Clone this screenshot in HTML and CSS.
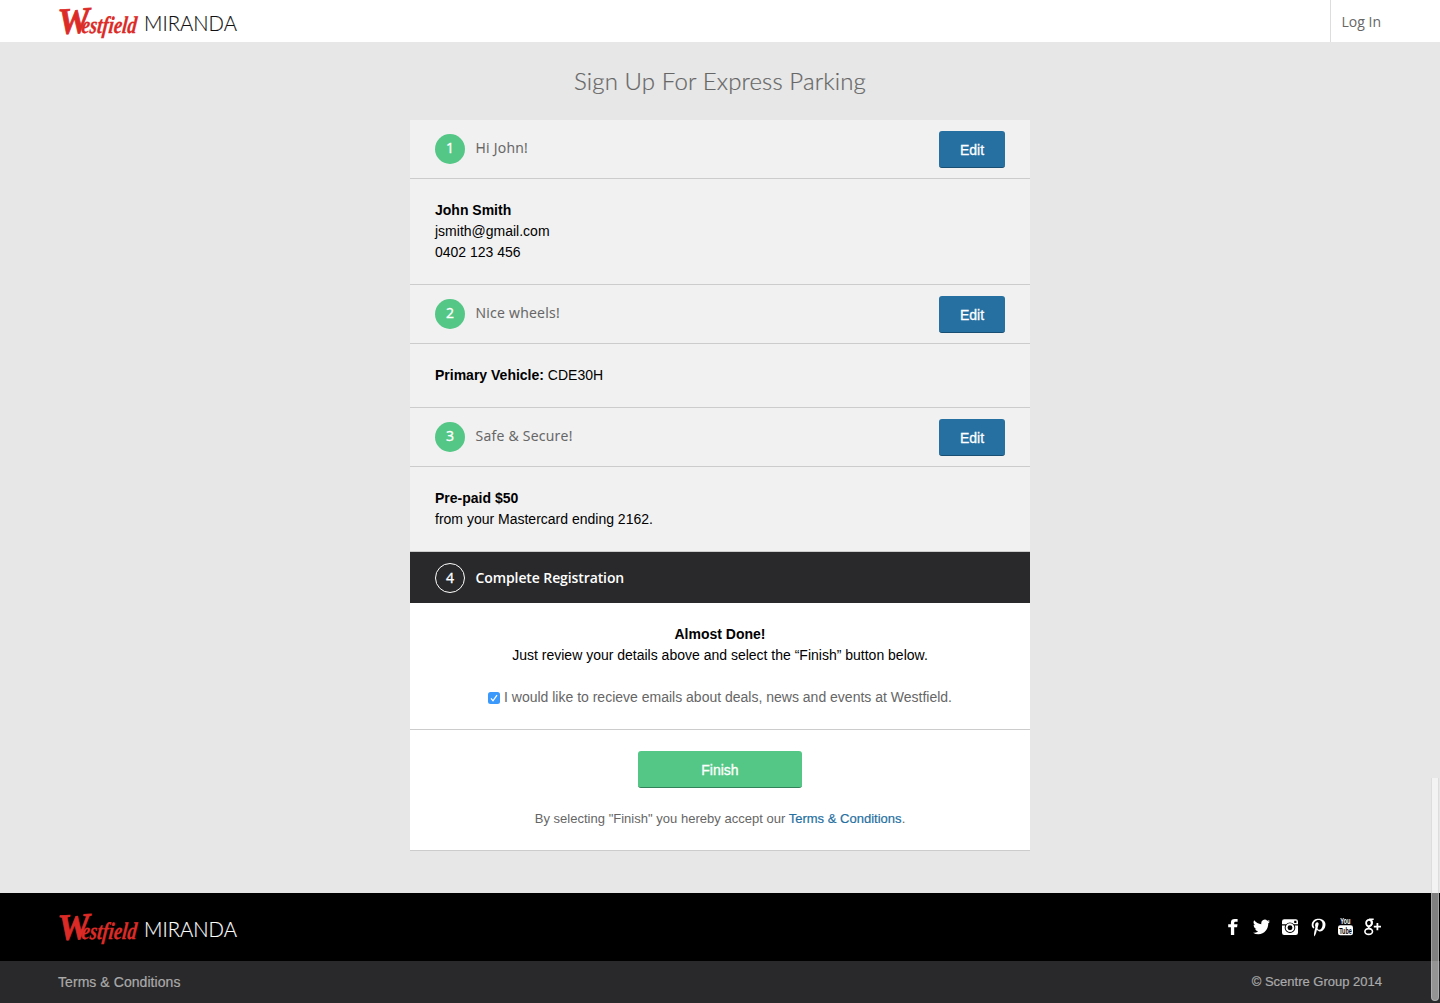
FILE: index.html
```html
<!DOCTYPE html>
<html lang="en">
<head>
<meta charset="utf-8">
<title>Sign Up For Express Parking</title>
<link rel="stylesheet" href="styles.css">
</head>
<body>
<header class="topbar">
  <svg class="logo" width="180" height="42" viewBox="0 0 180 42" role="img" aria-label="Westfield Miranda">
    <g class="logo-word">
      <text class="logo-cap" transform="translate(-.5 34) rotate(-3)" textLength="32" lengthAdjust="spacingAndGlyphs">W</text>
      <text class="logo-rest" transform="translate(22 32.500) skewX(-6)" textLength="55" lengthAdjust="spacingAndGlyphs">estfield</text>
    </g>
    <text class="logo-centre" x="85" y="31" textLength="93" lengthAdjust="spacingAndGlyphs">MIRANDA</text>
  </svg>
  <a class="login">Log In</a>
</header>
<main class="page">
  <h1 class="title">Sign Up For Express Parking</h1>
  <div class="steps">
    <section>
      <div class="step-head"><span class="num">1</span><h2 class="step-title">Hi John!</h2><button class="btn edit">Edit</button></div>
      <div class="step-body"><p><b>John Smith</b></p><p>jsmith@gmail.com</p><p>0402 123 456</p></div>
    </section>
    <section>
      <div class="step-head"><span class="num">2</span><h2 class="step-title">Nice wheels!</h2><button class="btn edit">Edit</button></div>
      <div class="step-body"><p><b>Primary Vehicle:</b> CDE30H</p></div>
    </section>
    <section>
      <div class="step-head"><span class="num">3</span><h2 class="step-title">Safe &amp; Secure!</h2><button class="btn edit">Edit</button></div>
      <div class="step-body"><p><b>Pre-paid $50</b></p><p>from your Mastercard ending 2162.</p></div>
    </section>
    <section class="current">
      <div class="step-head current-head"><span class="num outlined">4</span><h2 class="step-title">Complete Registration</h2></div>
      <div class="review">
        <p><b>Almost Done!</b></p>
        <p>Just review your details above and select the “Finish” button below.</p>
        <label class="optin">
          <svg class="check" width="12" height="12" viewBox="0 0 12 12"><rect width="12" height="12" rx="2.5" fill="#3b99fc"/><path d="M3 6.4 5 8.8 9 3.2" fill="none" stroke="#fff" stroke-width="1.3"/></svg>
          <span>I would like to recieve emails about deals, news and events at Westfield.</span>
        </label>
      </div>
      <div class="finish">
        <button class="btn go">Finish</button>
        <p class="terms">By selecting "Finish" you hereby accept our <a class="link">Terms &amp; Conditions</a>.</p>
      </div>
    </section>
  </div>
</main>
<footer>
  <div class="foot-top">
    <svg class="logo logo-inverse" width="180" height="42" viewBox="0 0 180 42" role="img" aria-label="Westfield Miranda">
      <g class="logo-word">
        <text class="logo-cap" transform="translate(-.5 34) rotate(-3)" textLength="32" lengthAdjust="spacingAndGlyphs">W</text>
        <text class="logo-rest" transform="translate(22 32.500) skewX(-6)" textLength="55" lengthAdjust="spacingAndGlyphs">estfield</text>
      </g>
      <text class="logo-centre" x="85" y="31" textLength="93" lengthAdjust="spacingAndGlyphs">MIRANDA</text>
    </svg>
    <div class="social">
      <svg width="10" height="18" viewBox="0 0 10 18"><path d="M2.900 17V9.300H.2V6.300h2.700V4.700C2.900 2 4.300 1 6.600 1h3v2.800H7.800C6.600 3.800 6.200 4.300 6.200 5.200v1.100h3.300l-.4 3H6.200V17z"/></svg>
      <svg width="17" height="18" viewBox="0 0 24 24" preserveAspectRatio="none"><path d="M23.950 4.570a10 10 0 0 1-2.820.77 4.960 4.960 0 0 0 2.160-2.720 9.900 9.900 0 0 1-3.120 1.190 4.920 4.920 0 0 0-8.390 4.480A13.940 13.940 0 0 1 1.640 3.160a4.920 4.920 0 0 0 1.520 6.570 4.900 4.900 0 0 1-2.230-.61v.06a4.920 4.920 0 0 0 3.950 4.830 5 5 0 0 1-2.210.08 4.940 4.940 0 0 0 4.600 3.420A9.870 9.870 0 0 1 0 19.540a14 14 0 0 0 7.550 2.210c9.050 0 14-7.500 14-13.990v-.64a9.940 9.940 0 0 0 2.400-2.550z"/></svg>
      <svg width="16" height="18" viewBox="0 0 16 18"><path fill-rule="evenodd" d="M2.200 1.200h11.600A2.200 2.200 0 0 1 16 3.400v11.400a2.200 2.200 0 0 1-2.200 2.200H2.200A2.200 2.200 0 0 1 0 14.800V3.400a2.200 2.200 0 0 1 2.200-2.200zM12.200 2.800v2.200h2.200V2.800zM0 6.300v1.100h3.200a5.300 5.300 0 1 0 9.600 0H16V6.300h-4.100a5.300 5.300 0 0 0-7.800 0z"/><circle cx="8" cy="9.700" r="3.400" fill="none" stroke="#fff" stroke-width="1.900"/></svg>
      <svg class="pin" width="15" height="19" viewBox="0 0 15 19"><path d="M5.800 12.100C5.300 14.700 4.800 17 3.100 18.500c-.5-3.700.8-6.500 1.400-9.600-1-1.800.1-5.400 2.300-4.500 2.700 1-2.300 6.600 1 7.300 3.500.7 4.900-6.200 2.700-8.400C7.500.2 1.900 3.400 2.600 7.700c.2 1 1.200 1.300.4 2.800C1.200 10.100.6 8.600.7 6.600.8 3.400 3.600 1.100 6.400.8c3.900-.4 7.500 1.400 8 4.800.5 4-1.800 8.100-5.900 7.800-1-.1-1.400-.6-2.700-1.300z"/></svg>
      <svg class="tube" width="15" height="20" viewBox="0 0 15 20"><text class="yt" x="2.200" y="8" textLength="10.300" lengthAdjust="spacingAndGlyphs">You</text><rect y="9.300" width="15" height="10" rx="2.200"/><text class="yt yt-dark" x="1.200" y="17.700" textLength="12.600" lengthAdjust="spacingAndGlyphs">Tube</text></svg>
      <svg width="17" height="18" viewBox="0 0 17 18" stroke="#fff"><g fill="none"><ellipse cx="4.900" cy="5.100" rx="2.800" ry="3.200" stroke-width="1.800"/><path d="M4.900 1.300H9.700M7.300 2c1.300 1.400 1.300 4-.3 5.100-1.900 1.200-3.400 1.700-2 2.700l2 1.300" stroke-width="1.500"/><ellipse cx="4.700" cy="13.500" rx="3.800" ry="2.900" stroke-width="1.600"/><path d="M9.800 8.700H17M13.400 5.100v7.200" stroke-width="1.800"/></g></svg>
    </div>
  </div>
  <div class="foot-bottom"><a class="foot-link">Terms &amp; Conditions</a><span class="copy">© Scentre Group 2014</span></div>
</footer>
<div class="scroll-thumb"></div>
</body>
</html>
```
FILE: styles.css
```css
* { box-sizing: border-box; }
body, p, h1, h2 { margin: 0; }
body {
  min-height: 1003px;
  display: flex;
  flex-direction: column;
  background: #e7e7e7;
  color: #000;
  font: 14px/21px "Liberation Sans", Arial, sans-serif;
}
.topbar {
  height: 42px;
  padding: 0 0 0 59px;
  display: flex;
  justify-content: space-between;
  align-items: center;
  background: #fff;
}
.logo { display: block; overflow: visible; }
.logo-word { fill: #dc2b27; stroke: #dc2b27; stroke-width: .3; font-family: "Liberation Serif", serif; font-style: italic; font-weight: 700; }
.logo-cap { font-size: 37px; stroke-width: .8; }
.logo-rest { font-size: 24px; }
.logo-centre { fill: #111; stroke: #111; stroke-width: .15; font: 300 21px Lato, sans-serif; }
.logo-inverse .logo-centre { fill: #fff; stroke: #fff; }
.login {
  width: 110px;
  height: 42px;
  padding-left: 10.5px;
  border-left: 1px solid #ddd;
  color: #666;
  font: 14px/43px "Open Sans", sans-serif;
}
.page { flex: 1; }
.title {
  padding-top: 21px;
  height: 78px;
  text-align: center;
  color: #666;
  font: 300 24px/36px Lato, sans-serif;
  letter-spacing: .12px;
  -webkit-text-stroke: .2px #666;
}
.steps { width: 620px; margin: 0 auto; background: #f1f1f1; }
.step-head {
  height: 59px;
  padding: 0 25px;
  display: flex;
  align-items: center;
  border-bottom: 1px solid #ccc;
  font-family: "Open Sans", sans-serif;
}
.num {
  width: 30px;
  height: 30px;
  margin-right: 10.5px;
  border-radius: 50%;
  background: #54c786;
  color: #fff;
  -webkit-text-stroke: .35px #fff;
  line-height: 28px;
  text-align: center;
}
.step-title { flex: 1; padding-bottom: 3px; color: #666; font-size: 14px; font-weight: 400; line-height: 21px; letter-spacing: .25px; -webkit-text-stroke: .1px #666; }
.btn {
  height: 37px;
  padding: 2px 0 0;
  border: 0;
  border-bottom: 1px solid #194f73;
  border-radius: 3px;
  background: #256fa1;
  color: #fff;
  font: 14px "Liberation Sans", Arial, sans-serif;
  -webkit-text-stroke: .3px #fff;
}
.edit { width: 66px; }
.step-body { padding: 21px 25px; border-bottom: 1px solid #ccc; }
.current { background: #fff; border-bottom: 1px solid #ccc; }
.current-head { height: 51px; border: 0; background: #29292b; }
.current-head .step-title { padding: 0; color: #fff; font-weight: 600; letter-spacing: -.1px; -webkit-text-stroke: 0; }
.outlined { background: none; border: 1px solid #fff; }
.review { height: 127px; padding-top: 21px; border-bottom: 1px solid #ccc; text-align: center; }
.optin { margin-top: 21px; display: flex; justify-content: center; align-items: center; gap: 4px; color: #666; }
.check { margin-top: 1px; }
.finish { height: 120px; padding-top: 21px; display: flex; flex-direction: column; align-items: center; }
.go { width: 164px; background: #54c786; border-color: #32835a; }
.terms { margin-top: 20px; color: #666; font-size: 13px; letter-spacing: .015px; }
.link { color: #256fa1; -webkit-text-stroke: .2px #256fa1; }
.foot-top {
  height: 68px;
  padding: 0 59px;
  display: flex;
  align-items: center;
  justify-content: space-between;
  background: #000;
}
.social { display: flex; align-items: center; gap: 12px; }
.social svg { display: block; fill: #fff; }
.social svg:first-child { margin-right: 3px; }
.social .pin { margin: 0 -1px 0 1px; }
.social .tube { margin: -2px -1px 0 1px; overflow: visible; }
.yt { font: 700 9.5px "Liberation Sans", sans-serif; }
.yt-dark { fill: #000; }
.foot-bottom {
  height: 42px;
  padding: 0 58px;
  display: flex;
  align-items: center;
  justify-content: space-between;
  background: #29292b;
  color: #aaa;
}
.foot-link { letter-spacing: .06px; -webkit-text-stroke: .2px #aaa; }
.copy { margin-top: -1px; font-size: 13px; -webkit-text-stroke: .2px #aaa; }
.scroll-thumb {
  position: absolute;
  right: 1px;
  top: 778px;
  width: 8px;
  height: 223px;
  border: 1px solid rgba(200, 200, 200, .5);
  border-top: 0;
  border-radius: 0 0 4px 4px;
  background: rgba(255, 255, 255, .5);
}
```
